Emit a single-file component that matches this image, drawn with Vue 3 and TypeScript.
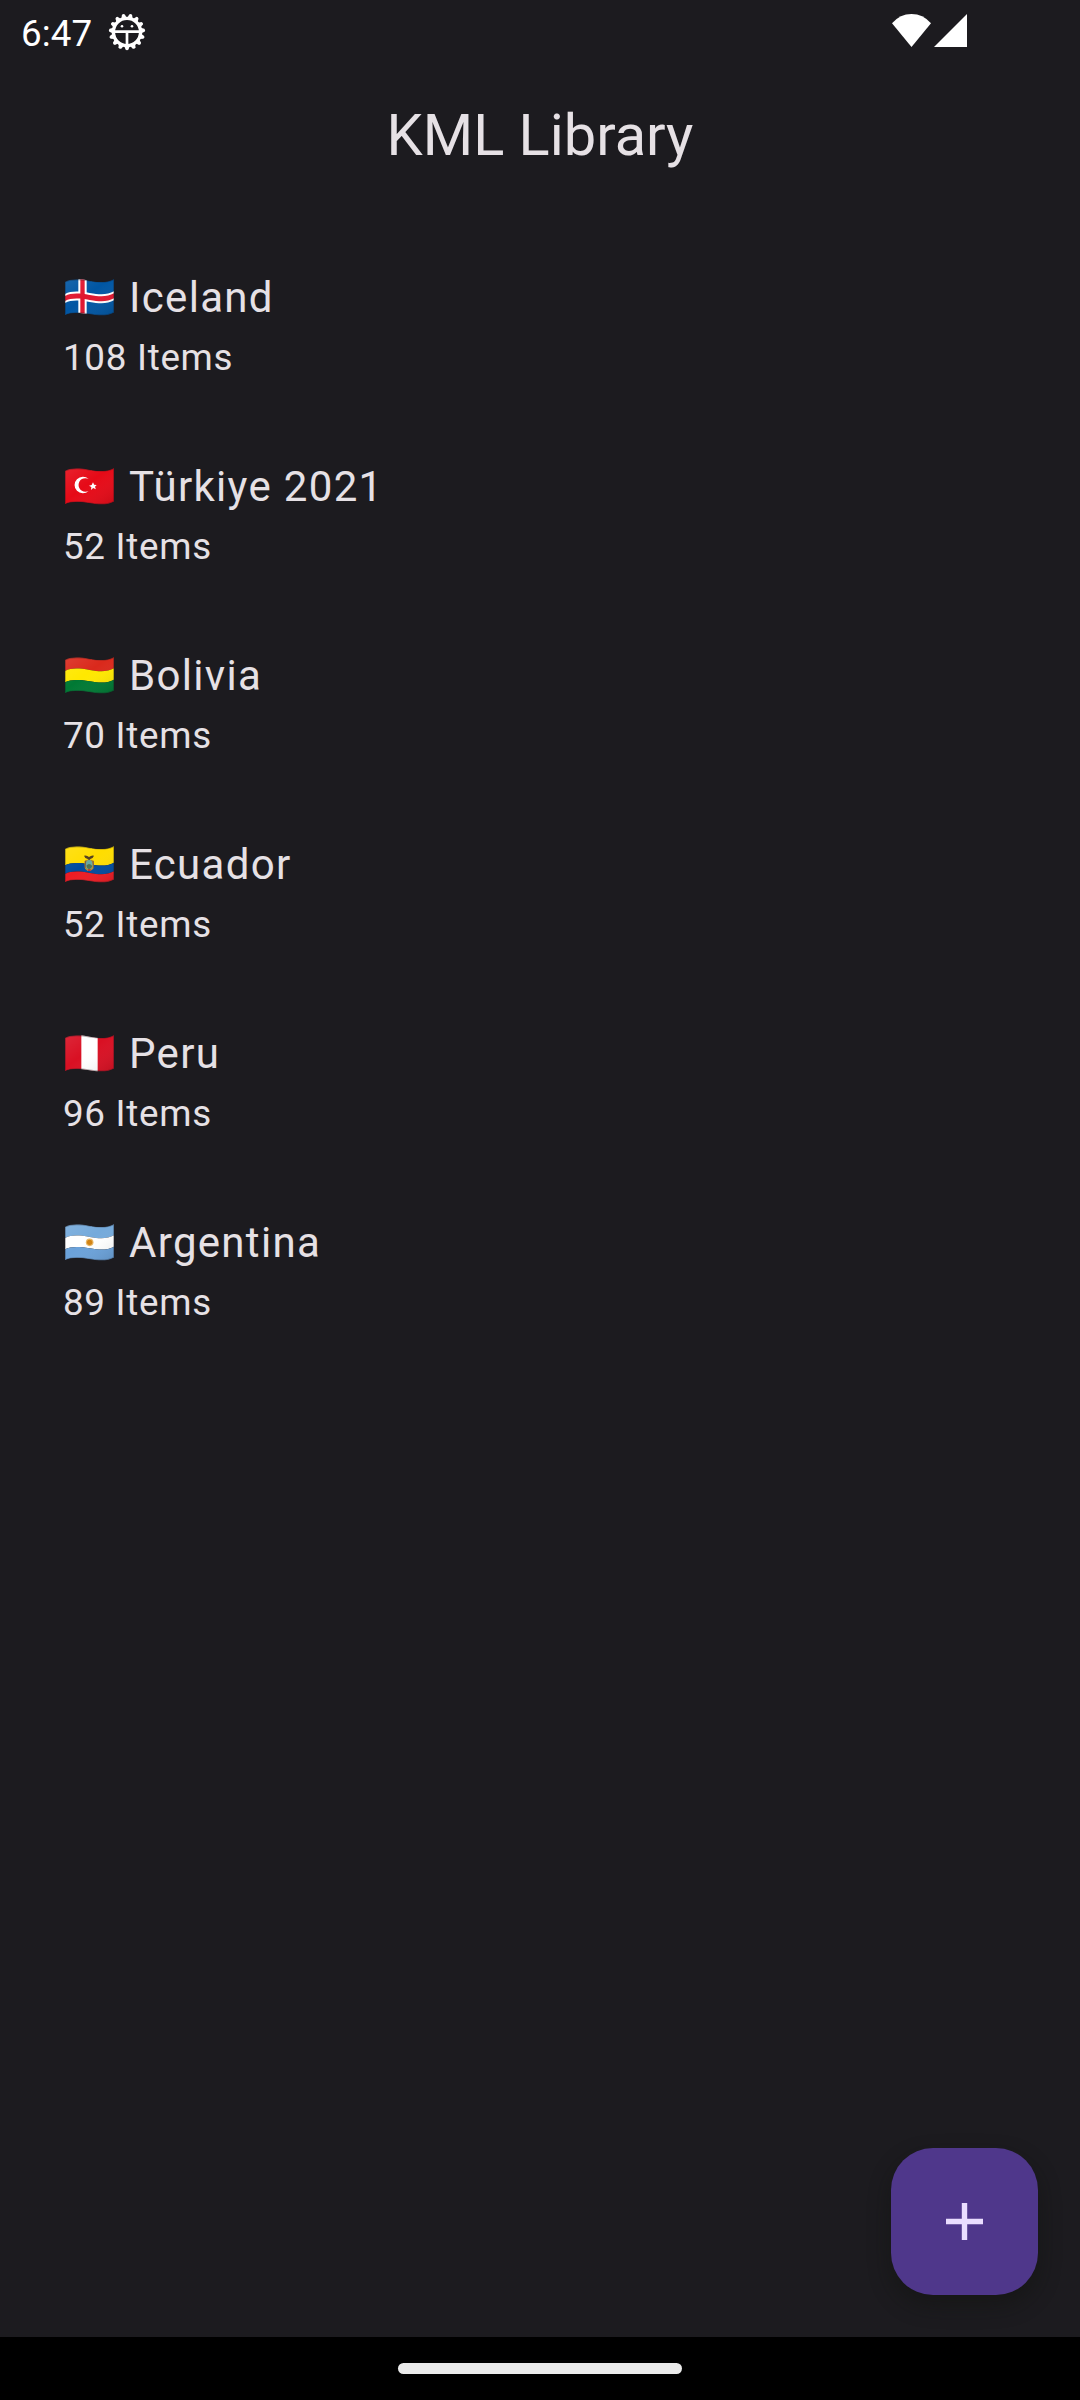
<script setup lang="ts">
type FlagCode = 'is' | 'tr' | 'bo' | 'ec' | 'pe' | 'ar'

interface Library {
  code: FlagCode
  name: string
  count: number
}

const libraries: Library[] = [
  { code: 'is', name: 'Iceland', count: 108 },
  { code: 'tr', name: 'Türkiye 2021', count: 52 },
  { code: 'bo', name: 'Bolivia', count: 70 },
  { code: 'ec', name: 'Ecuador', count: 52 },
  { code: 'pe', name: 'Peru', count: 96 },
  { code: 'ar', name: 'Argentina', count: 89 },
]

// A horizontal stripe that follows the wave of the cloth.
function band(top: number, bottom: number): string {
  const t = top
  const b = bottom
  return (
    `M0 ${8 + t}C18 ${-1 + t} 40 ${-1 + t} 74 ${5 + t}S128 ${10 + t} 147 ${t}` +
    `V${b}C128 ${10 + b} 108 ${11 + b} 74 ${5 + b}S18 ${-1 + b} 0 ${8 + b}Z`
  )
}

interface Stripe {
  from: number
  to: number
  fill: string
}

const stripes: Record<FlagCode, Stripe[]> = {
  is: [{ from: 0, to: 101, fill: '#0056a3' }],
  tr: [{ from: 0, to: 101, fill: '#e60a17' }],
  bo: [
    { from: 0, to: 34, fill: '#da291c' },
    { from: 34, to: 68, fill: '#ffe800' },
    { from: 68, to: 101, fill: '#007934' },
  ],
  ec: [
    { from: 0, to: 50, fill: '#ffdd00' },
    { from: 50, to: 76, fill: '#004b9d' },
    { from: 76, to: 101, fill: '#ed1c24' },
  ],
  pe: [{ from: 0, to: 101, fill: '#d91023' }],
  ar: [
    { from: 0, to: 34, fill: '#75aadb' },
    { from: 34, to: 68, fill: '#ffffff' },
    { from: 68, to: 101, fill: '#6ba2da' },
  ],
}

const teeth: number[] = Array.from({ length: 15 }, (_, i) => (i + 0.5) * 24)
</script>

<template>
  <div class="screen">
    <div class="status">
      <span class="clock">6:47</span>
      <svg class="gear" viewBox="0 0 38 38">
        <g fill="#fff">
          <path
            v-for="a in teeth"
            :key="a"
            d="M16.300 5L17.500 1.400Q19 0 20.500 1.400L21.700 5Z"
            :transform="`rotate(${a} 19 19)`"
          />
        </g>
        <circle cx="19" cy="19" r="13.600" fill="none" stroke="#fff" stroke-width="3.400" />
        <path d="M6 18.700H32M19 18.700V34" fill="none" stroke="#fff" stroke-width="2.700" />
        <circle cx="14" cy="13.300" r="1.300" fill="#fff" />
        <circle cx="24" cy="13.300" r="1.300" fill="#fff" />
      </svg>
      <div class="signals">
        <svg class="wifi" viewBox="0 0 39 33">
          <path d="M19.5 33L0 9.3Q8 0 19.5 0T39 9.3Z" fill="#fff" />
        </svg>
        <svg class="cell" viewBox="0 0 33 33">
          <path d="M33 0V33H0Z" fill="#fff" />
        </svg>
      </div>
    </div>

    <header class="bar"><h1>KML Library</h1></header>

    <ul class="list">
      <li v-for="lib in libraries" :key="lib.code" class="row">
        <div class="name">
          <svg class="flag" viewBox="0 0 147 110">
            <defs>
              <clipPath :id="`cloth-${lib.code}`"><path :d="band(0, 101)" /></clipPath>
              <linearGradient :id="`shade-${lib.code}`" x1="0" y1="0" x2="1" y2="1">
                <stop offset="0" stop-color="#fff" stop-opacity=".1" />
                <stop offset=".45" stop-color="#fff" stop-opacity="0" />
                <stop offset="1" stop-color="#000" stop-opacity=".12" />
              </linearGradient>
            </defs>
            <g :clip-path="`url(#cloth-${lib.code})`">
              <path v-for="s in stripes[lib.code]" :key="s.from" :d="band(s.from, s.to)" :fill="s.fill" />

              <template v-if="lib.code === 'is'">
                <path d="M40 0H65V110H40Z" fill="#fff" />
                <path :d="band(37, 64)" fill="#fff" />
                <path d="M46 0H59V110H46Z" fill="#e0162f" />
                <path :d="band(43, 58)" fill="#e0162f" />
              </template>

              <template v-else-if="lib.code === 'tr'">
                <path
                  d="M71 33A25 25 0 1 0 71 69A20.500 20.500 0 1 1 71 33Z"
                  fill="#fff"
                />
                <path d="M84 43L87.500 50L95 51L90 56L92.500 64L84.500 60L78 66L79 57L72 53L80 51Z" fill="#fff" />
              </template>

              <template v-else-if="lib.code === 'ec'">
                <path d="M57 29Q66 27 72 33Q79 27 87 29Q84 38 76 39L73 44L68 39Q59 37 57 29Z" fill="#54401f" />
                <path d="M58 46L66 41H79L87 46L85 68L76 75H68L60 68Z" fill="#b38b2d" />
                <ellipse cx="72.500" cy="56" rx="10" ry="14" fill="#6aa9a0" />
                <path d="M64 59Q72 49 82 60Q79 69 72 70Q66 68 64 59Z" fill="#4d7052" />
                <path d="M62 44L60 66M84 44L86 66" stroke="#765b49" stroke-width="3" />
                <path d="M69 70H77V75H69Z" fill="#c42c2c" />
              </template>

              <template v-else-if="lib.code === 'pe'">
                <path d="M49 0H98V110H49Z" fill="#fff" />
              </template>

              <template v-else-if="lib.code === 'ar'">
                <circle cx="74" cy="55" r="11.500" fill="#e9b765" />
                <circle cx="74" cy="55" r="8" fill="#d18213" />
              </template>

              <path :d="band(0, 101)" :fill="`url(#shade-${lib.code})`" />
              <path :d="band(0, 101)" fill="none" stroke="#1c1b1f" stroke-opacity=".35" stroke-width="5" />
            </g>
          </svg>
          <span>{{ lib.name }}</span>
        </div>
        <div class="count">{{ lib.count }} Items</div>
      </li>
    </ul>

    <button class="fab" aria-label="Add">
      <svg viewBox="0 0 37 37">
        <path d="M18.500 0V37M0 18.500H37" stroke="#eaddff" stroke-width="5.400" />
      </svg>
    </button>

    <footer class="nav"><div class="pill"></div></footer>
  </div>
</template>

<style>
body {
  background: #1c1b1f;
}
</style>

<style scoped>
.screen {
  position: relative;
  display: flex;
  flex-direction: column;
  width: 1080px;
  height: 2400px;
  overflow: hidden;
  background: #1c1b1f;
  color: #e6e1e5;
  font-family: Roboto, sans-serif;
}
.status {
  display: flex;
  align-items: flex-start;
  box-sizing: border-box;
  height: 63px;
  padding: 0 113px 0 21px;
  color: #fff;
}
.clock {
  width: 87px;
  padding-top: 12px;
  font-size: 36.75px;
  line-height: 43px;
  letter-spacing: 0.1px;
}
.gear {
  width: 38px;
  height: 38px;
  margin-top: 12.500px;
}
.signals {
  display: flex;
  gap: 3px;
  margin: 14px 0 0 auto;
}
.wifi {
  width: 39px;
  height: 33px;
}
.cell {
  width: 33px;
  height: 33px;
}
.bar {
  display: flex;
  align-items: center;
  justify-content: center;
  box-sizing: border-box;
  height: 144px;
  padding-top: 2px;
}
h1 {
  margin: 0;
  font-size: 57.75px;
  font-weight: 400;
  line-height: 73.5px;
}
.list {
  flex: 1;
  margin: 0;
  padding: 22px 0 0;
  list-style: none;
}
.row {
  box-sizing: border-box;
  height: 189px;
  padding: 37px 63px 0;
}
.name {
  display: flex;
  align-items: center;
  height: 63px;
  font-size: 42px;
  line-height: 63px;
  letter-spacing: 1.3125px;
}
.flag {
  width: 49px;
  height: 36.67px;
  margin: 0 14.700px 0 2.330px;
}
.count {
  margin-top: 3px;
  font-size: 36.75px;
  line-height: 52.5px;
  letter-spacing: 0.72px;
}
.fab {
  position: absolute;
  left: 891px;
  top: 2148px;
  display: flex;
  align-items: center;
  justify-content: center;
  width: 147px;
  height: 147px;
  padding: 0;
  border: 0;
  border-radius: 42px;
  background: #4f378b;
  box-shadow: 0 10px 22px rgba(16, 18, 14, 0.45);
}
.fab svg {
  width: 37px;
  height: 37px;
}
.nav {
  display: flex;
  align-items: center;
  justify-content: center;
  height: 63px;
  background: #000;
}
.pill {
  width: 284px;
  height: 11px;
  border-radius: 6px;
  background: #ebebeb;
}
</style>
